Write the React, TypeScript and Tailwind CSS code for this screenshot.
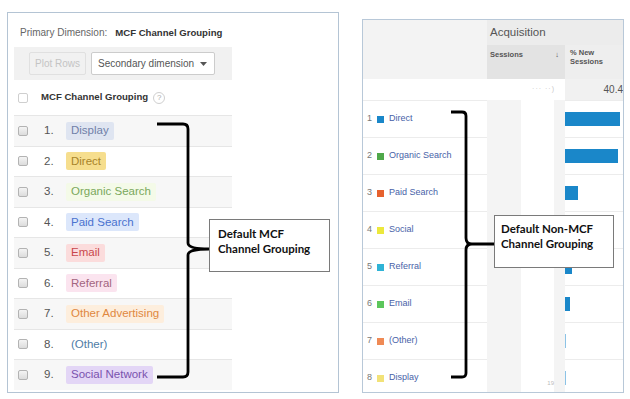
import React from "react";

type LRow = { n: number; label: string; cls: string };

const leftRows: LRow[] = [
  { n: 1, label: "Display", cls: "bg-[#dfe5f1] text-[#6f80a8]" },
  { n: 2, label: "Direct", cls: "bg-[#f6de8e] text-[#a8842a]" },
  { n: 3, label: "Organic Search", cls: "bg-[#f4fae8] text-[#7aa85c]" },
  { n: 4, label: "Paid Search", cls: "bg-[#dce7fb] text-[#4a72cf]" },
  { n: 5, label: "Email", cls: "bg-[#fbdcdc] text-[#c9464b]" },
  { n: 6, label: "Referral", cls: "bg-[#fbe4ef] text-[#a3657f]" },
  { n: 7, label: "Other Advertising", cls: "bg-[#fdeedd] text-[#e0883f]" },
  { n: 8, label: "(Other)", cls: "bg-transparent text-[#4f7ca6]" },
  { n: 9, label: "Social Network", cls: "bg-[#e3d6f6] text-[#7a52ae]" },
];

type RRow = { n: number; label: string; sq: string; bar: number };

const rightRows: RRow[] = [
  { n: 1, label: "Direct", sq: "bg-[#1a87c9]", bar: 55 },
  { n: 2, label: "Organic Search", sq: "bg-[#4fa84a]", bar: 53 },
  { n: 3, label: "Paid Search", sq: "bg-[#e6612e]", bar: 13 },
  { n: 4, label: "Social", sq: "bg-[#ece83c]", bar: 0 },
  { n: 5, label: "Referral", sq: "bg-[#2fb3d6]", bar: 7 },
  { n: 6, label: "Email", sq: "bg-[#5cc65c]", bar: 5 },
  { n: 7, label: "(Other)", sq: "bg-[#ef8a55]", bar: 1 },
  { n: 8, label: "Display", sq: "bg-[#f2e278]", bar: 1 },
];

function Checkbox({ white }: { white?: boolean }) {
  return (
    <div
      className={
        "w-[10px] h-[10px] rounded-[2px] border " +
        (white
          ? "border-[#cfcfcf] bg-white"
          : "border-[#b3b3b3] bg-gradient-to-b from-[#f4f4f4] to-[#dcdcdc]")
      }
    />
  );
}

function LeftPanel() {
  return (
    <div className="w-[332px] h-[381px] border border-[#b4c4d4] bg-white px-[6px] shrink-0">
      <div className="h-[34px] flex items-end pb-[8px] pl-[6px] text-[10px] leading-[13px]">
        <span className="text-[#666]">Primary Dimension:</span>
        <span className="ml-[8px] font-bold text-[9.6px] text-[#333]">MCF Channel Grouping</span>
      </div>
      <div className="w-[218px] h-[33px] bg-[#f1f1f1] flex items-center pl-[15px] gap-[5px]">
        <div className="w-[57px] h-[23px] border border-[#e0e0e0] rounded-[2px] flex items-center justify-center text-[10px] text-[#c4c4c4]">
          Plot Rows
        </div>
        <div className="w-[124px] h-[23px] border border-[#cccccc] rounded-[2px] bg-white flex items-center pl-[6px] pr-[7px] text-[10px] text-[#555]">
          <span className="flex-1">Secondary dimension</span>
          <svg width="7" height="4" viewBox="0 0 7 4">
            <path d="M0 0 H7 L3.5 4 Z" fill="#555" />
          </svg>
        </div>
      </div>
      <div className="w-[218px] h-[35px] flex items-center pl-[4px]">
        <Checkbox white />
        <span className="ml-[13px] text-[9.6px] font-bold text-[#333]">MCF Channel Grouping</span>
        <span className="ml-[5px] w-[12px] h-[12px] rounded-full border border-[#cfcfcf] flex items-center justify-center text-[8px] leading-none text-[#aaa]">
          ?
        </span>
      </div>
      <div className="w-[218px]">
        {leftRows.map((r) => (
          <div
            key={r.n}
            className={
              "h-[30.5px] border-t border-[#e6e6e6] flex items-center pl-[4px] " +
              (r.n % 2 === 1 ? "bg-[#f7f7f7]" : "bg-white")
            }
          >
            <Checkbox />
            <span className="ml-[16px] w-[22px] text-[11.5px] text-[#555]">{r.n}.</span>
            <span className={"h-[18px] flex items-center px-[5px] rounded-[2px] text-[11.5px] " + r.cls}>
              {r.label}
            </span>
          </div>
        ))}
      </div>
    </div>
  );
}

function RightPanel() {
  return (
    <div className="ml-[23px] mt-[7px] w-[262px] h-[374px] border border-[#b8c8d8] bg-white overflow-hidden shrink-0">
      <div className="flex h-[59px]">
        <div className="w-[124px] bg-[#f3f3f3]" />
        <div className="flex-1 flex flex-col">
          <div className="h-[25px] bg-[#ececec] flex items-center pl-[3px] text-[11.5px] text-[#555]">
            Acquisition
          </div>
          <div className="flex-1 flex">
            <div className="w-[78px] bg-[#e3e3e3] flex items-start pt-[4px] pl-[3px] pr-[6px] text-[7.5px] font-bold text-[#555]">
              <span className="flex-1">Sessions</span>
              <span>↓</span>
            </div>
            <div className="flex-1 bg-[#eeeeee] pt-[3px] pl-[5px] text-[7.5px] leading-[9px] font-bold text-[#555]">
              % New
              <br />
              Sessions
            </div>
          </div>
        </div>
      </div>
      <div className="flex h-[21px]">
        <div className="w-[124px] bg-white" />
        <div className="w-[78px] bg-white flex items-center justify-end pr-[10px] text-[7px] text-[#c8c8c8] tracking-[1px]">
          ··· ··)
        </div>
        <div className="flex-1 bg-[#f1f1f1] flex items-center justify-end text-[10px] text-[#555] overflow-hidden whitespace-nowrap">
          40.4
        </div>
      </div>
      {rightRows.map((r) => (
        <div key={r.n} className="flex h-[37px]">
          <div className="w-[124px] border-t border-[#ececec] flex items-center pl-[4px] text-[9px]">
            <span className="w-[10px] text-[#777]">{r.n}</span>
            <span className={"w-[7px] h-[7px] mr-[5px] " + r.sq} />
            <span className="text-[#4862a8]">{r.label}</span>
          </div>
          <div className="w-[78px] bg-[#f4f4f4] flex">
            <div className="ml-[34px] w-[33px] h-full bg-white flex items-end justify-end pb-[8px] text-[6px] text-[#bbb]">
              {r.n === 8 ? "19" : ""}
            </div>
          </div>
          <div className="flex-1 border-t border-[#ececec] flex items-center">
            {r.bar > 0 && (
              <div
                className={"h-[14px] " + (r.bar <= 1 ? "bg-[#8cc3e6]" : "bg-[#1a87c9]")}
                style={{ width: r.bar + "px" }}
              />
            )}
          </div>
        </div>
      ))}
    </div>
  );
}

export default function App() {
  return (
    <div className="relative w-[630px] h-[399px] bg-white overflow-hidden font-['Liberation_Sans',Arial,sans-serif]">
      <div className="flex items-start pl-[7px] pt-[12px]">
        <LeftPanel />
        <RightPanel />
      </div>
      <svg className="absolute inset-0 pointer-events-none" width="630" height="399" viewBox="0 0 630 399">
        <path
          d="M157 124 H183 Q188 124 188 129 V243 Q188 249 209 249 Q188 249 188 255 V372 Q188 377 183 377 H157"
          fill="none"
          stroke="#000"
          strokeWidth="2.8"
          strokeLinejoin="round"
        />
        <path
          d="M451 112 H462 Q466 112 466 116 V238 Q466 244 472 244 H494 M472 244 Q466 244 466 250 V373 Q466 377 462 377 H451"
          fill="none"
          stroke="#000"
          strokeWidth="2.8"
          strokeLinejoin="round"
        />
      </svg>
      <div className="absolute left-[209px] top-[219px] w-[121px] h-[53px] border border-[#7a7a7a] bg-white pl-[8px] pt-[6px] font-['Lato',sans-serif] font-bold text-[11.5px] leading-[15px] text-[#111]">
        Default MCF
        <br />
        Channel Grouping
      </div>
      <div className="absolute left-[494px] top-[215px] w-[120px] h-[53px] border border-[#7a7a7a] bg-white pl-[6px] pt-[5px] font-['Lato',sans-serif] font-bold text-[11.5px] leading-[15px] text-[#111]">
        Default Non-MCF
        <br />
        Channel Grouping
      </div>
    </div>
  );
}
